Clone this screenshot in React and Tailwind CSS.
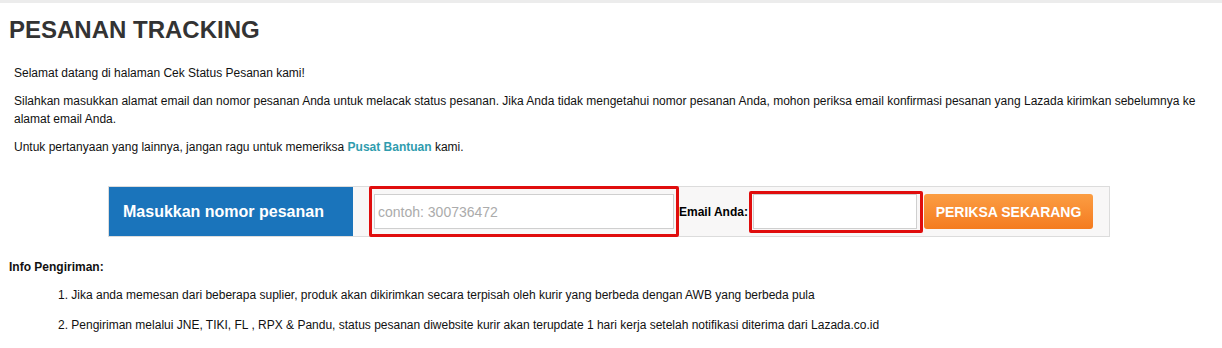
export default function App() {
  return (
    <div className="w-[1222px] min-h-[348px] bg-white font-['Liberation_Sans',Arial,sans-serif] text-[12px] leading-[18px] text-[#111]">
      <div className="h-[3px] bg-[#ececec]" />
      <div className="px-[9px]">
        <h1 className="mt-[13px] text-[24px] leading-[28px] font-bold text-[#333]">PESANAN TRACKING</h1>

        <div className="mt-[20px] pl-[5px] pr-[10px] flex flex-col gap-[10px]">
          <p>Selamat datang di halaman Cek Status Pesanan kami!</p>
          <p>
            Silahkan masukkan alamat email dan nomor pesanan Anda untuk melacak status pesanan. Jika Anda tidak
            mengetahui nomor pesanan Anda, mohon periksa email konfirmasi pesanan yang Lazada kirimkan sebelumnya ke
            alamat email Anda.
          </p>
          <p>
            Untuk pertanyaan yang lainnya, jangan ragu untuk memeriksa{" "}
            <a href="#" className="font-bold text-[#2f9cae]">Pusat Bantuan</a> kami.
          </p>
        </div>

        {/* tracking form */}
        <div className="mt-[30px] ml-[99px] w-[1002px] h-[51px] border border-[#dcdcdc] bg-[#f8f7f7] flex items-center">
          <div className="self-stretch w-[244px] bg-[#1a74bb] flex items-center pl-[14px] text-white text-[16px] font-bold">
            Masukkan nomor pesanan
          </div>
          <div className="ml-[16px] w-[310px] h-[51px] border-[3px] border-[#e00d0d] rounded-[2px] px-[2px] flex items-center">
            <input
              type="text"
              placeholder="contoh: 300736472"
              className="w-full h-[35px] bg-white border border-[#cfcfcf] px-[3px] text-[14px] placeholder:text-[#ababab] outline-none"
            />
          </div>
          <label className="w-[69px] font-bold text-[12px] text-black whitespace-nowrap">Email Anda:</label>
          <div className="ml-px w-[174px] h-[42px] border-[3px] border-[#e00d0d] rounded-[2px] pl-px flex items-center">
            <input type="text" className="w-[164px] h-[35px] bg-white border border-[#cfcfcf] px-[3px] outline-none" />
          </div>
          <button
            type="button"
            className="ml-px w-[169px] h-[35px] rounded-[3px] bg-gradient-to-b from-[#fb9d42] to-[#f47b1e] text-white text-[14px] font-bold"
          >
            PERIKSA SEKARANG
          </button>
        </div>

        <div className="mt-[21px] font-bold">Info Pengiriman:</div>
        <ol className="mt-[10px] pl-[49px] flex flex-col gap-[12px]">
          <li>1. Jika anda memesan dari beberapa suplier, produk akan dikirimkan secara terpisah oleh kurir yang berbeda dengan AWB yang berbeda pula</li>
          <li>2. Pengiriman melalui JNE, TIKI, FL , RPX &amp; Pandu, status pesanan diwebsite kurir akan terupdate 1 hari kerja setelah notifikasi diterima dari Lazada.co.id</li>
        </ol>
      </div>
    </div>
  );
}
